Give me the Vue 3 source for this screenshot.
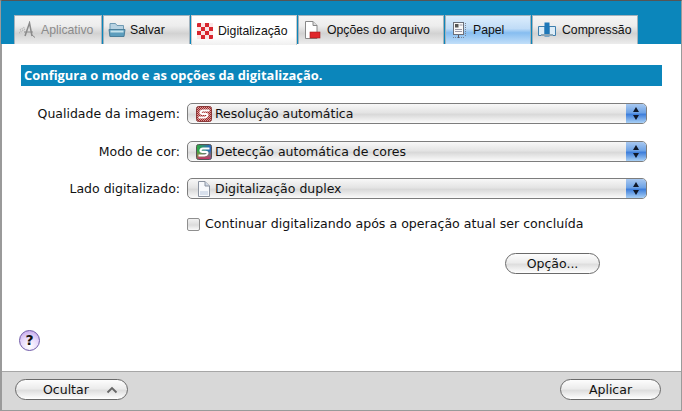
<template>
  <div class="window">
    <div class="tab-strip">
      <div
        v-for="tab in tabs"
        :key="tab.name"
        class="tab"
        :class="tab.cls"
        :style="{ width: tab.width + 'px' }"
      >
        <svg v-if="tab.icon === 'app'" class="tab-icon" viewBox="0 0 18 18">
          <path d="M0 12 L6 8 M1 9 L6 6" stroke="#b5b5b5" stroke-width="1.5" stroke-dasharray="1 1" fill="none" />
          <path d="M6 15 L10.5 2 L13 15" stroke="#8a8a8a" stroke-width="1.5" fill="none" />
          <path d="M5 11 H14 M13 14 L16 16.5" stroke="#8a8a8a" stroke-width="1" fill="none" />
        </svg>
        <svg v-else-if="tab.icon === 'folder'" class="tab-icon" viewBox="0 0 18 18">
          <path d="M2 2.5 H7.5 L9 4.5 H15.5 V15.5 H2 Z" fill="#b7d2e2" stroke="#6f9ab3" />
          <path d="M1 8.5 H17 L16 15.5 H2 Z" fill="#5c9dbd" stroke="#4b7f9b" />
          <rect x="2.5" y="9.5" width="13" height="2" fill="#c4e2ec" />
        </svg>
        <svg v-else-if="tab.icon === 'check'" class="tab-icon" viewBox="0 0 18 18">
          <rect x="1" y="1" width="16" height="16" rx="1" fill="#d8252e" />
          <path d="M5 1h4v4H5zM13 1h4v4h-4zM1 5h4v4H1zM9 5h4v4H9zM5 9h4v4H5zM13 9h4v4h-4zM1 13h4v4H1zM9 13h4v4H9z" fill="#fbe6e6" />
        </svg>
        <svg v-else-if="tab.icon === 'file'" class="tab-icon" viewBox="0 0 18 18">
          <path d="M2.5 .5 H10 L14 4.5 V17.5 H2.5 Z" fill="#fff" stroke="#888" />
          <path d="M10 .5 V4.5 H14" fill="#ddd" stroke="#888" />
          <rect x="7" y="11" width="10" height="6" fill="#e0262b" stroke="#a01c1c" stroke-width=".6" />
        </svg>
        <svg v-else-if="tab.icon === 'paper'" class="tab-icon" viewBox="0 0 18 18">
          <rect x="2.5" y="1.5" width="10" height="12" fill="#f8f8f8" stroke="#6b6f7a" />
          <rect x="4" y="3" width="3.5" height="3.5" fill="#555" />
          <path d="M8.5 4h3M4 8.5h7M4 10.5h7" stroke="#99a" stroke-width="1" />
          <path d="M14.5 2v13M2 16.5h12" stroke="#7b8494" stroke-dasharray="1 1" />
          <path d="M7.5 14v3" stroke="#556" />
        </svg>
        <svg v-else-if="tab.icon === 'book'" class="tab-icon" viewBox="0 0 18 18">
          <path d="M.5 5.5 H7 V14.5 H.5 Z M11 5.5 H17.5 V14.5 H11 Z" fill="#dcecf7" stroke="#3e7fae" />
          <rect x="6.5" y="1.5" width="5" height="14" fill="#1d77b8" />
          <rect x="3" y="13" width="12" height="2" fill="#8ba4b5" />
        </svg>
        <span class="tab-label">{{ tab.name }}</span>
      </div>
    </div>

    <main class="content">
      <div class="banner">Configura o modo e as opções da digitalização.</div>

      <div class="form">
        <div v-for="row in rows" :key="row.label" class="form-row" :class="row.cls">
          <label class="form-label">{{ row.label }}</label>
          <div class="select">
            <svg v-if="row.icon === 'quality'" class="select-icon" viewBox="0 0 16 16">
              <defs>
                <pattern id="hatch" width="2" height="2" patternUnits="userSpaceOnUse">
                  <rect width="2" height="2" fill="#d99a9a" />
                  <rect width="1" height="1" fill="#9c2a2a" />
                  <rect x="1" y="1" width="1" height="1" fill="#9c2a2a" />
                </pattern>
              </defs>
              <rect x=".5" y=".5" width="15" height="15" rx="2" fill="url(#hatch)" stroke="#8a3a3a" />
              <path class="s-mark" d="M13.5 4.5 H7 Q4.5 4.5 4.5 6.5 Q4.5 7.8 6.5 7.8 H9.5 Q11.8 7.8 11.3 9.8 Q10.8 11.5 8.5 11.5 H2.5" />
            </svg>
            <svg v-else-if="row.icon === 'colour'" class="select-icon" viewBox="0 0 16 16">
              <defs>
                <linearGradient id="rainbow" x1="0" y1="0" x2="1" y2="0">
                  <stop offset="0" stop-color="#2fae3c" />
                  <stop offset="1" stop-color="#2b62c8" />
                </linearGradient>
                <linearGradient id="rainbow-low" x1="0" y1="0" x2="0" y2="1">
                  <stop offset=".4" stop-color="#d8a020" stop-opacity="0" />
                  <stop offset="1" stop-color="#c92a6a" />
                </linearGradient>
              </defs>
              <rect x=".5" y=".5" width="15" height="15" rx="2" fill="url(#rainbow)" stroke="#555" />
              <rect x="1" y="1" width="14" height="14" rx="2" fill="url(#rainbow-low)" />
              <path class="s-mark" d="M13.5 4.5 H7 Q4.5 4.5 4.5 6.5 Q4.5 7.8 6.5 7.8 H9.5 Q11.8 7.8 11.3 9.8 Q10.8 11.5 8.5 11.5 H2.5" />
            </svg>
            <svg v-else class="select-icon" viewBox="0 0 16 16">
              <path d="M2.5 .5 H9 L13.5 5 V15.5 H2.5 Z" fill="#f7f9fc" stroke="#8b93a0" />
              <path d="M9 .5 V5 H13.5" fill="#cfd8e6" stroke="#8b93a0" />
              <path d="M4 11h8M4 13h8" stroke="#b8c6dc" />
            </svg>
            <span class="select-text">{{ row.value }}</span>
            <span class="stepper">
              <i class="arrow up"></i>
              <i class="arrow down"></i>
            </span>
          </div>
        </div>

        <div class="check-row">
          <span class="checkbox"></span>
          <span class="check-text">Continuar digitalizando após a operação atual ser concluída</span>
        </div>

        <div class="option-row">
          <button class="pill option-btn">Opção...</button>
        </div>
      </div>

      <div class="help">?</div>
    </main>

    <footer class="footer">
      <button class="pill hide-btn">
        <span>Ocultar</span>
        <svg class="chevron" viewBox="0 0 12 8">
          <path d="M1.5 6.5 L6 2 L10.5 6.5" fill="none" stroke="#666" stroke-width="1.8" />
        </svg>
      </button>
      <button class="pill apply-btn">Aplicar</button>
    </footer>
  </div>
</template>

<script setup>
const tabs = [
  { name: 'Aplicativo', icon: 'app', width: 88, cls: 'disabled' },
  { name: 'Salvar', icon: 'folder', width: 87, cls: '' },
  { name: 'Digitalização', icon: 'check', width: 106, cls: 'active' },
  { name: 'Opções do arquivo', icon: 'file', width: 146, cls: 'file-tab' },
  { name: 'Papel', icon: 'paper', width: 86, cls: 'selected' },
  { name: 'Compressão', icon: 'book', width: 106, cls: 'book-tab' },
]

const rows = [
  { label: 'Qualidade da imagem:', value: 'Resolução automática', icon: 'quality', cls: '' },
  { label: 'Modo de cor:', value: 'Detecção automática de cores', icon: 'colour', cls: 'second' },
  { label: 'Lado digitalizado:', value: 'Digitalização duplex', icon: 'page', cls: 'last' },
]
</script>

<style>
html,
body {
  margin: 0;
  overflow: hidden;
  background: #fff;
}
</style>

<style scoped>
.window {
  width: 682px;
  height: 411px;
  box-sizing: border-box;
  display: flex;
  flex-direction: column;
  border: 1px solid #9a9a9a;
  border-left-width: 2px;
  border-top-color: #555;
  background: #fff;
  font-family: "DejaVu Sans", sans-serif;
  color: #111;
}

.tab-strip {
  height: 43px;
  flex: none;
  box-sizing: border-box;
  margin-left: -1px;
  padding: 14px 0 0 13px;
  display: flex;
  gap: 1px;
  background: #0b86bb;
}

.tab {
  height: 29px;
  box-sizing: border-box;
  display: flex;
  align-items: center;
  padding-left: 4px;
  gap: 4px;
  border: 1px solid #a3b2bc;
  border-bottom: none;
  background: linear-gradient(#f4f4f4 0%, #ededed 35%, #d2d2d2 62%, #ececec 100%);
  font-family: "Liberation Sans", sans-serif;
  font-size: 12.25px;
  color: #111;
}

.tab.disabled {
  color: #8b8b8b;
}

.tab.active {
  background: linear-gradient(#fff 70%, #f0f0f0 100%);
  height: 30px;
  border-color: #c9c9c9;
}

.tab.file-tab,
.tab.book-tab {
  gap: 6px;
}

.tab.book-tab {
  padding-left: 5px;
}

.tab.selected {
  padding-left: 5px;
  gap: 4px;
  background: linear-gradient(#dcedfc 0%, #c0dcf7 45%, #86bdf0 60%, #c2dff9 100%);
}

.tab-icon {
  width: 18px;
  height: 18px;
  flex: none;
}

.content {
  flex: 1;
  position: relative;
  padding: 21px 19px 0 19px;
}

.banner {
  width: 641px;
  height: 21px;
  box-sizing: border-box;
  padding-left: 3px;
  background: #0b86bb;
  color: #fff;
  font-family: "Open Sans", sans-serif;
  font-size: 12.9px;
  font-weight: 700;
  line-height: 21px;
  white-space: nowrap;
}

.form {
  margin-top: 17px;
}

.form-row {
  display: flex;
  align-items: center;
  margin-bottom: 17px;
  height: 21px;
}

.form-row.second {
  margin-bottom: 16px;
}

.form-row.last {
  margin-bottom: 18px;
}

.form-label {
  width: 159px;
  margin-right: 7px;
  text-align: right;
  font-size: 12.5px;
  white-space: nowrap;
}

.select {
  width: 460px;
  height: 21px;
  box-sizing: border-box;
  display: flex;
  align-items: center;
  padding-left: 8px;
  border: 1px solid #7d7d7d;
  border-radius: 5px;
  background: linear-gradient(#f8f8f8 0%, #e4e4e4 45%, #d9d9d9 55%, #fbfbfb 100%);
  position: relative;
  overflow: hidden;
}

.select-icon {
  width: 16px;
  height: 16px;
  flex: none;
}

.s-mark {
  fill: none;
  stroke: #fff;
  stroke-width: 2.2;
}

.select-text {
  margin-left: 3px;
  font-size: 12.5px;
  white-space: nowrap;
}

.stepper {
  position: absolute;
  right: 0;
  top: 0;
  bottom: 0;
  width: 20px;
  display: flex;
  flex-direction: column;
  align-items: center;
  justify-content: center;
  gap: 3px;
  background: linear-gradient(#a8c8f0 0%, #6ea3e6 45%, #3f7fdb 55%, #a9d0f5 100%);
}

.arrow {
  width: 0;
  height: 0;
  border-left: 3px solid transparent;
  border-right: 3px solid transparent;
}

.arrow.up {
  border-bottom: 5px solid #101828;
}

.arrow.down {
  border-top: 5px solid #101828;
}

.check-row {
  display: flex;
  align-items: center;
  height: 14px;
  margin-left: 166px;
}

.checkbox {
  width: 13px;
  height: 13px;
  box-sizing: border-box;
  border: 1px solid #8f8f8f;
  border-radius: 2px;
  background: linear-gradient(#f2f2f2, #dcdcdc 55%, #fafafa);
}

.check-text {
  margin-left: 5px;
  margin-top: -2px;
  font-size: 12.6px;
  white-space: nowrap;
}

.option-row {
  margin-top: 22px;
  padding-left: 484px;
}

.pill {
  height: 21px;
  box-sizing: border-box;
  padding: 0;
  border: 1px solid #6a6a6a;
  border-radius: 11px;
  background: linear-gradient(#fdfdfd 0%, #ececec 45%, #dedede 55%, #ffffff 100%);
  font-family: "DejaVu Sans", sans-serif;
  font-size: 12.5px;
  color: #111;
}

.option-btn {
  width: 95px;
}

.help {
  position: absolute;
  left: 17px;
  top: 286px;
  width: 21px;
  height: 21px;
  box-sizing: border-box;
  border: 1px solid #6f5aa8;
  border-radius: 50%;
  background: radial-gradient(circle at 50% 80%, #fff 0%, #e7d8fb 50%, #bd9ce8 100%);
  text-align: center;
  font-family: "DejaVu Sans", sans-serif;
  font-size: 14px;
  font-weight: 700;
  line-height: 19px;
  color: #111;
}

.footer {
  height: 39px;
  flex: none;
  box-sizing: border-box;
  padding: 7px 20px 0 13px;
  display: flex;
  justify-content: space-between;
  align-items: flex-start;
  border-top: 1px solid #a6a6a6;
  background: #d8d8d8;
}

.hide-btn {
  width: 113px;
  position: relative;
  text-align: left;
  padding-left: 27px;
}

.chevron {
  position: absolute;
  right: 9px;
  top: 6px;
  width: 12px;
  height: 8px;
}

.apply-btn {
  width: 101px;
}
</style>
